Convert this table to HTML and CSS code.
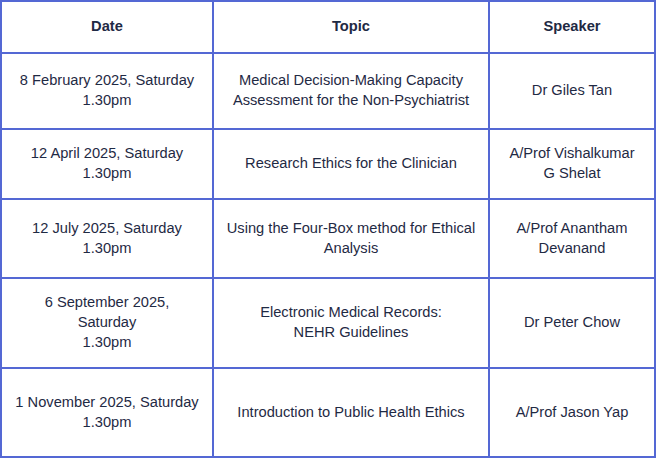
FILE: index.html
```html
<!DOCTYPE html>
<html lang="en">
<head>
<meta charset="utf-8">
<title>Schedule</title>
<link rel="stylesheet" href="styles.css">
</head>
<body>
<div class="schedule">
  <div class="cell head">Date</div>
  <div class="cell head">Topic</div>
  <div class="cell head">Speaker</div>

  <div class="cell">8 February 2025, Saturday<br>1.30pm</div>
  <div class="cell">Medical Decision-Making Capacity Assessment for the Non-Psychiatrist</div>
  <div class="cell">Dr Giles Tan</div>

  <div class="cell">12 April 2025, Saturday<br>1.30pm</div>
  <div class="cell">Research Ethics for the Clinician</div>
  <div class="cell">A/Prof Vishalkumar G Shelat</div>

  <div class="cell">12 July 2025, Saturday<br>1.30pm</div>
  <div class="cell">Using the Four-Box method for Ethical Analysis</div>
  <div class="cell">A/Prof Anantham Devanand</div>

  <div class="cell">6 September 2025, Saturday<br>1.30pm</div>
  <div class="cell">Electronic Medical Records:<br>NEHR Guidelines</div>
  <div class="cell">Dr Peter Chow</div>

  <div class="cell">1 November 2025, Saturday<br>1.30pm</div>
  <div class="cell">Introduction to Public Health Ethics</div>
  <div class="cell">A/Prof Jason Yap</div>
</div>
</body>
</html>
```

FILE: styles.css
```css
html, body {
  margin: 0;
  padding: 0;
  background: #ffffff;
}

.schedule {
  display: grid;
  grid-template-columns: 210px 274px 164px;
  grid-template-rows: 50px 74px 68px 77px 88px 87px;
  gap: 2px;
  padding: 2px;
  width: 652px;
  background: #5468d4;
  font-family: "Liberation Sans", Arial, sans-serif;
  font-size: 14.67px;
  line-height: 20px;
  color: #1f2a44;
}

.cell {
  background: #ffffff;
  display: flex;
  align-items: center;
  justify-content: center;
  text-align: center;
  padding: 0 12px 2px;
}

.head {
  font-weight: bold;
}
```
